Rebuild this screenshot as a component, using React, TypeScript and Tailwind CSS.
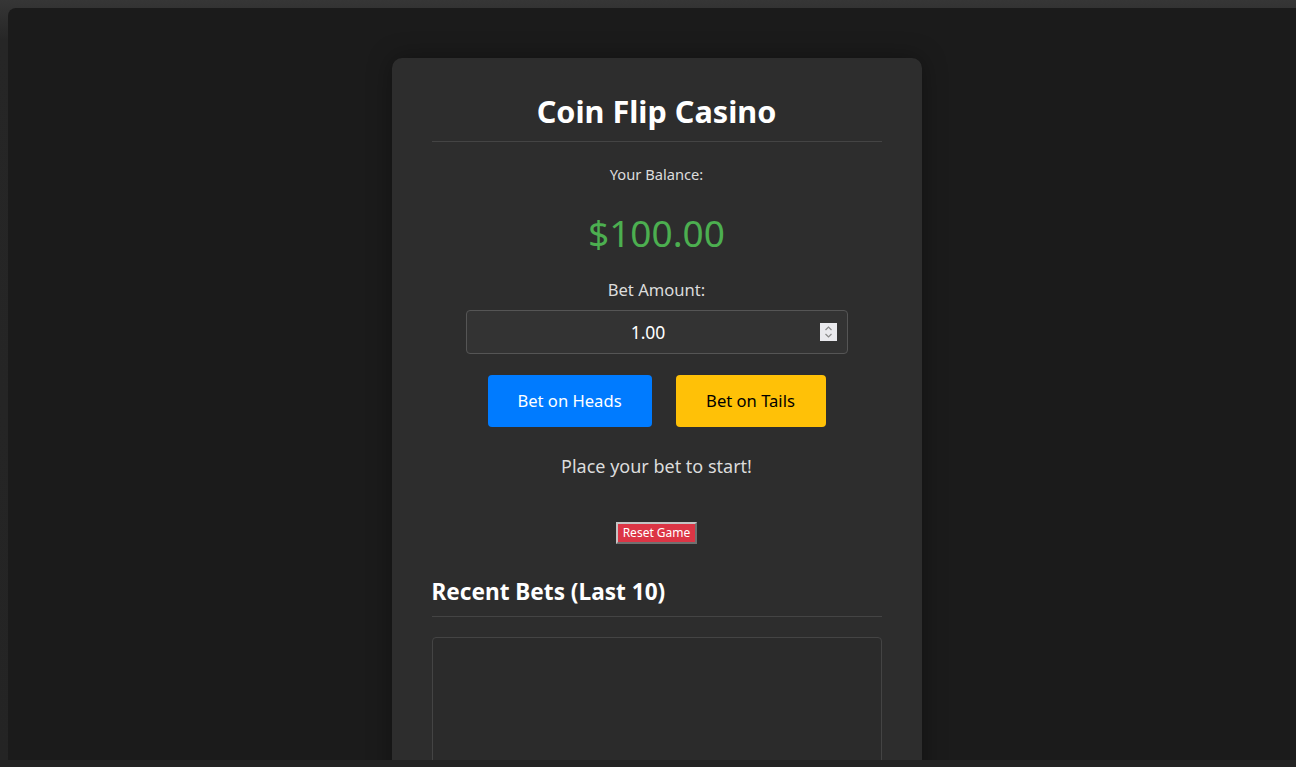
export default function App() {
  return (
    <div className="h-[767px] w-[1296px] overflow-hidden bg-[linear-gradient(to_bottom,#363636,#262626_40px,#242424)] pl-[8px] pt-[8px] font-['Noto_Sans',sans-serif]">
      <div className="flex h-[752px] justify-center overflow-hidden rounded-tl-[8px] bg-[#1b1b1b] pl-[9px]">
        <div className="mt-[50px] h-[760px] w-[530px] shrink-0 rounded-[10px] bg-[#2d2d2d] px-[40px] pt-[34px] shadow-[0_0_24px_rgba(0,0,0,0.35)]">
          <div className="border-b border-[#444] pb-[11px] text-center">
            <h1 className="h-[38px] text-[30.6px] font-bold leading-[38px] text-white">Coin Flip Casino</h1>
          </div>

          <p className="mt-[22px] text-center text-[14.7px] leading-[20px] text-[#dcdcdc]">Your Balance:</p>
          <p className="mt-[27px] text-center text-[37px] leading-[44px] text-[#4caf50]">$100.00</p>

          <p className="mt-[24px] text-center text-[16.6px] leading-[22px] text-[#dcdcdc]">Bet Amount:</p>
          <div className="relative mx-auto mt-[9px] h-[44px] w-[382px]">
            <input
              readOnly
              value="1.00"
              className="h-full w-full rounded-[4px] border border-[#555] bg-[#333] pr-[17px] text-center text-[17.5px] text-white outline-none"
            />
            <div className="absolute right-[11px] top-[13px] flex h-[18px] w-[17px] items-center justify-center bg-[#e9e9ed]">
              <svg width="9" height="14" viewBox="0 0 9 14" fill="none" stroke="#8a8a8a" strokeWidth="1.2">
                <path d="M1.5 5 L4.5 2 L7.5 5" />
                <path d="M1.5 9 L4.5 12 L7.5 9" />
              </svg>
            </div>
          </div>

          <div className="mt-[21px] flex justify-center gap-[24px]">
            <button className="h-[52px] w-[164px] rounded-[4px] bg-[#007bff] text-[16.6px] text-white">Bet on Heads</button>
            <button className="h-[52px] w-[150px] rounded-[4px] bg-[#ffc107] text-[16.6px] text-black">Bet on Tails</button>
          </div>

          <p className="mt-[25px] text-center text-[18px] leading-[28px] text-[#dcdcdc]">Place your bet to start!</p>

          <div className="mt-[42px] flex justify-center">
            <button className="h-[22px] border-2 border-[#c4c4c4] bg-[#dc3545] px-[5px] font-['Noto_Sans',sans-serif] text-[12px] leading-[16px] text-white [border-style:outset]">
              Reset Game
            </button>
          </div>

          <h2 className="mt-[33px] border-b border-[#444] pb-[9px] text-[22.6px] font-bold leading-[30px] text-white">
            Recent Bets (Last 10)
          </h2>
          <div className="mt-[20px] h-[200px] rounded-[4px] border border-[#444] bg-[#2b2b2b]" />
        </div>
      </div>
    </div>
  );
}
